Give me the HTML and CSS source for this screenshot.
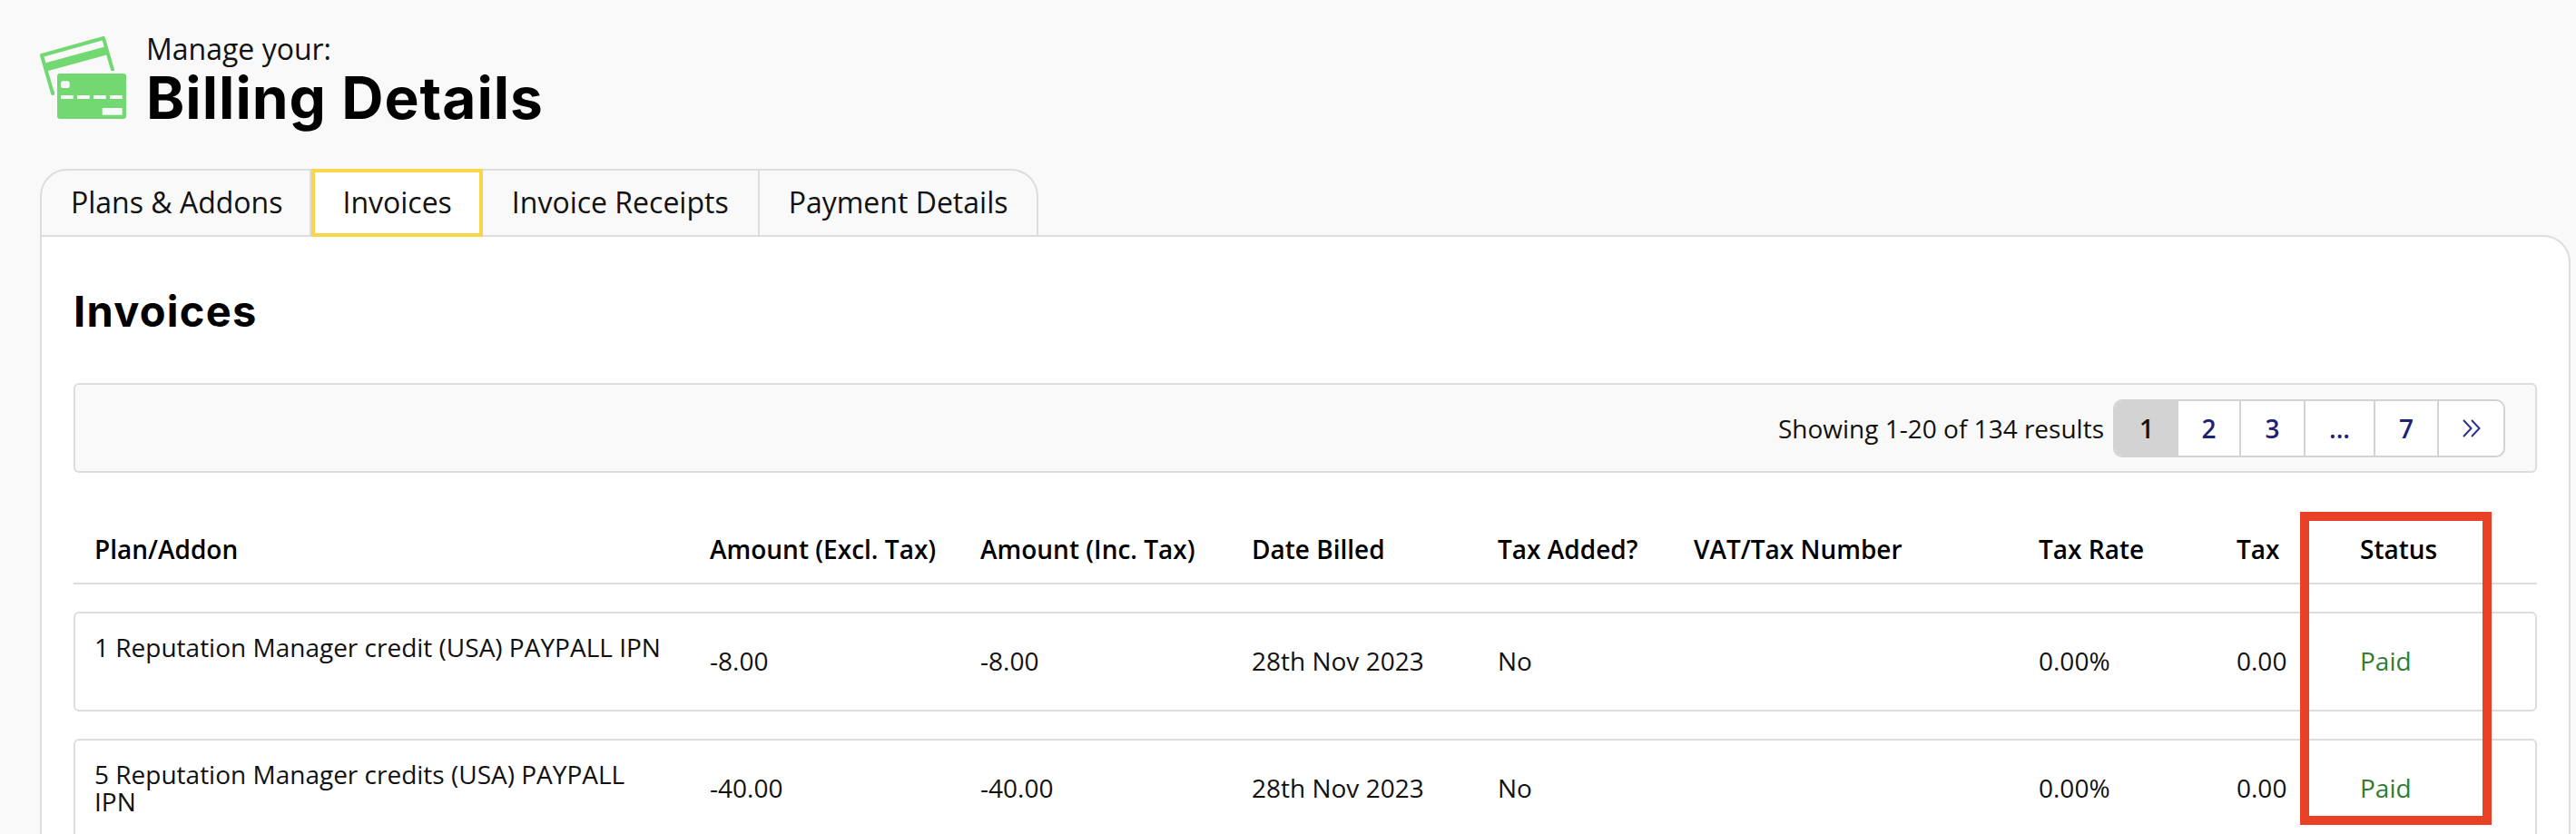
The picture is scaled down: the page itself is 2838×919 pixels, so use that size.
FILE: index.html
```html
<!DOCTYPE html>
<html>

<head>
    <meta charset="utf-8">
    <title>Billing Details</title>
    <link rel="stylesheet" href="styles.css">
</head>

<body>
    <div class="page">
        <div class="page-head">
            <svg class="head-icon" viewBox="0 0 95 91" width="95" height="91">
                <path d="M2 21 L70 2 L82 44 L14 63 Z" fill="none" stroke="#72d872" stroke-width="4" stroke-linejoin="round" />
                <path d="M6.3 29.3 L72.3 11.3 L75.3 20 L8.5 38.3 Z" fill="#72d872" />
                <rect x="16" y="38" width="79" height="53" fill="#f9f9f9" />
                <rect x="19" y="41" width="76" height="50" rx="3" fill="#72d872" />
                <rect x="23" y="49.3" width="9.7" height="7.7" rx="2.5" fill="#f9f9f9" />
                <rect x="23" y="65" width="13.7" height="4" fill="#f9f9f9" />
                <rect x="41" y="65" width="13.7" height="4" fill="#f9f9f9" />
                <rect x="59" y="65" width="13.7" height="4" fill="#f9f9f9" />
                <rect x="77" y="65" width="13.7" height="4" fill="#f9f9f9" />
                <rect x="68.7" y="79" width="22" height="7.7" fill="#f9f9f9" />
            </svg>
            <div class="head-text">
                <div class="head-sub">Manage your:</div>
                <h1>Billing Details</h1>
            </div>
        </div>

        <div class="tabs">
            <div class="tab tab-first">Plans &amp; Addons</div>
            <div class="tab tab-active">Invoices</div>
            <div class="tab">Invoice Receipts</div>
            <div class="tab tab-last">Payment Details</div>
        </div>

        <div class="panel">
            <h2>Invoices</h2>

            <div class="toolbar">
                <span class="results">Showing 1-20 of 134 results</span>
                <div class="pager">
                    <span class="pg pg-1 pg-on">1</span>
                    <span class="pg pg-2">2</span>
                    <span class="pg pg-3">3</span>
                    <span class="pg pg-dots">...</span>
                    <span class="pg pg-7">7</span>
                    <span class="pg pg-next">
                        <svg viewBox="0 0 24 24" width="24" height="24" fill="none" stroke="#2b3191" stroke-width="2">
                            <path d="M3 3 L11.5 12 L3 21" />
                            <path d="M12 3 L20.5 12 L12 21" />
                        </svg>
                    </span>
                </div>
            </div>

            <div class="row-head">
                <div>Plan/Addon</div>
                <div>Amount (Excl. Tax)</div>
                <div>Amount (Inc. Tax)</div>
                <div>Date Billed</div>
                <div>Tax Added?</div>
                <div>VAT/Tax Number</div>
                <div>Tax Rate</div>
                <div>Tax</div>
                <div>Status</div>
            </div>

            <div class="row">
                <div class="plan">1 Reputation Manager credit (USA) PAYPALL IPN</div>
                <div>-8.00</div>
                <div>-8.00</div>
                <div>28th Nov 2023</div>
                <div>No</div>
                <div></div>
                <div>0.00%</div>
                <div>0.00</div>
                <div class="paid">Paid</div>
            </div>

            <div class="row">
                <div class="plan">5 Reputation Manager credits (USA) PAYPALL IPN</div>
                <div>-40.00</div>
                <div>-40.00</div>
                <div>28th Nov 2023</div>
                <div>No</div>
                <div></div>
                <div>0.00%</div>
                <div>0.00</div>
                <div class="paid">Paid</div>
            </div>
        </div>
    </div>

    <div class="callout"></div>
</body>

</html>
```

FILE: styles.css
```css
* {
    padding: 0;
    margin: 0;
    box-sizing: border-box;
}

html,
body {
    height: 919px;
    overflow: hidden;
}

body {
    position: relative;
    background: #f9f9f9;
    color: #111;
    font-family: "Open Sans", sans-serif;
}

.page {
    padding: 40px 6px 0 44px;
}

.page-head {
    display: flex;
    gap: 22px;
    height: 146px;
}

.head-icon {
    flex: none;
}

.head-sub {
    font-size: 32px;
    line-height: 34px;
    margin-top: -3px;
}

h1 {
    font-family: Inter, sans-serif;
    font-size: 64px;
    font-weight: 700;
    line-height: 73px;
    color: #000;
    letter-spacing: 1px;
}

.tabs {
    display: flex;
    height: 75px;
}

.tab {
    display: flex;
    align-items: center;
    padding: 0 32px 3px;
    font-size: 32px;
    background: #f9f9f9;
    border: 2px solid #ddd;
    border-left: none;
}

.tab-first {
    padding: 0 30px 3px 32px;
    border-left: 2px solid #ddd;
    border-top-left-radius: 30px;
}

.tab-active {
    position: relative;
    z-index: 1;
    padding: 0 30px 2px;
    background: #fff;
    border: 4px solid #f9d648;
}

.tab-last {
    border-top-right-radius: 30px;
}

.panel {
    margin-top: -2px;
    height: 700px;
    padding: 0 35px;
    background: #fff;
    border: 2px solid #ddd;
    border-top-right-radius: 30px;
}

h2 {
    font-family: Inter, sans-serif;
    font-size: 47px;
    font-weight: 700;
    line-height: 60px;
    letter-spacing: 1.25px;
    color: #000;
    padding-top: 52px;
    height: 161px;
}

.toolbar {
    display: flex;
    align-items: center;
    justify-content: flex-end;
    gap: 10px;
    height: 99px;
    padding-right: 33px;
    background: #f9f9f9;
    border: 2px solid #ddd;
    border-radius: 6px;
}

.results {
    font-size: 28px;
}

.pager {
    display: flex;
    height: 64px;
    background: #fff;
    border: 2px solid #d3d3d3;
    border-radius: 10px;
    overflow: hidden;
    font-size: 28px;
    font-weight: 600;
    color: #1e2275;
}

.pg {
    display: flex;
    align-items: center;
    justify-content: center;
    border-left: 2px solid #d3d3d3;
}

.pg-1 { width: 70px; border-left: none; }
.pg-2 { width: 67px; border-left: none; }
.pg-3 { width: 71px; }
.pg-dots { width: 77px; }
.pg-7 { width: 70px; }
.pg-next { width: 73px; }

.pg-on {
    background: #d3d3d3;
    color: #111;
}

.row-head,
.row {
    display: grid;
    grid-template-columns: 678px 298px 299px 271px 216px 380px 218px 136px 1fr;
    font-size: 28px;
}

.row-head {
    align-items: center;
    height: 123px;
    padding: 46px 0 0 23px;
    font-weight: 600;
    color: #000;
    border-bottom: 2px solid #ddd;
}

.row {
    align-items: center;
    height: 110px;
    margin-top: 30px;
    padding: 0 0 3px 21px;
    background: #fff;
    border: 2px solid #ddd;
    border-radius: 6px;
}

.plan {
    align-self: start;
    padding: 22px 48px 0 0;
    line-height: 30px;
}

.paid {
    color: #2e7d32;
}

/* red marker drawn over the table */
.callout {
    position: absolute;
    left: 2534px;
    top: 564px;
    width: 211px;
    height: 345px;
    border: 10px solid #e94128;
}
```
